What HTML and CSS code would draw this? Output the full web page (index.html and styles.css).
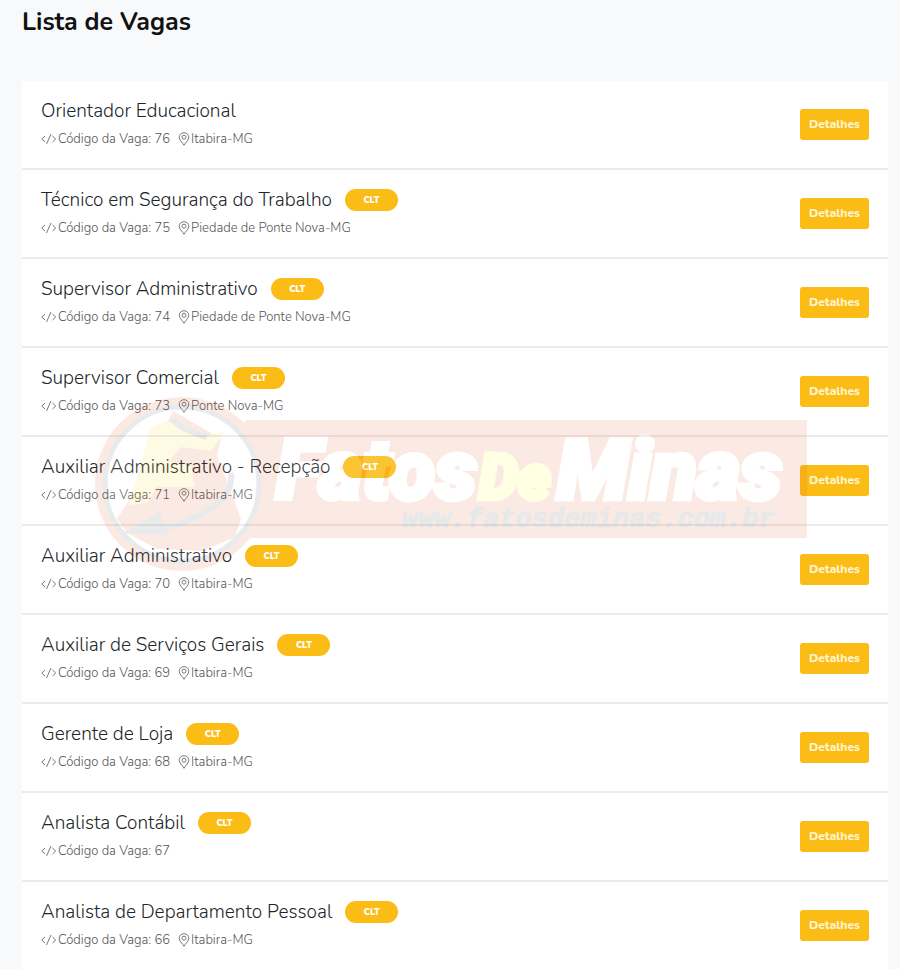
FILE: index.html
```html
<!DOCTYPE html>
<html lang="pt-BR">
<head>
  <meta charset="UTF-8" />
  <meta name="viewport" content="width=device-width, initial-scale=1.0"/>
  <title>Lista de Vagas</title>
  <link rel="stylesheet" href="styles.css">
</head>
<body>
  <svg class="sprite" aria-hidden="true">
    <symbol id="code" viewBox="0 0 16 12">
      <path d="M4 3 .8 6 4 9M11.500 3 14.700 6l-3.200 3M10 1 5.500 11" />
    </symbol>
    <symbol id="pin" viewBox="0 0 12 14">
      <path d="M6 13.300C4.500 10.500 1.200 8 1.200 5.200a4.800 4.500 0 0 1 9.600 0C10.800 8 7.500 10.500 6 13.300z" />
      <circle cx="6" cy="5.200" r="2" />
    </symbol>
  </svg>

  <h1>Lista de Vagas</h1>

  <main class="jobs">
    <ul id="jobList" class="job-list"></ul>

    <svg class="watermark" viewBox="0 0 712 178" aria-hidden="true">
      <rect class="wm-red" x="150" y="25" width="562" height="118" />
      <circle class="wm-red" cx="87" cy="89" r="87" />
      <circle class="wm-ring" cx="87" cy="89" r="77" />
      <path class="wm-red" d="M78 16 92 24 126 44 122 60 146 124 140 142 108 156 62 154 32 138 22 124 40 96 56 60z" />
      <path class="wm-yellow" d="M56 32 72 26 108 42 130 36 116 56 86 52 74 66 96 72 100 92 62 92 52 108 34 110 44 76z" />
      <path class="wm-line" d="M78 24Q84 34 112 42M136 78Q138 98 118 112T74 132" />
      <path class="wm-dark" d="M28 138 52 124 66 116 66 126 74 130 72 140z" />
      <text class="wm-name" x="181" y="104">Fatos</text>
      <text class="wm-name wm-de" x="384" y="104">De</text>
      <text class="wm-name" x="462" y="104">Minas</text>
      <text class="wm-site" x="307" y="132">www.fatosdeminas.com.br</text>
    </svg>
  </main>

  <script>
    const jobs = [
      { code: 76, title: "Orientador Educacional", city: "Itabira-MG" },
      { code: 75, title: "Técnico em Segurança do Trabalho", type: "CLT", city: "Piedade de Ponte Nova-MG" },
      { code: 74, title: "Supervisor Administrativo", type: "CLT", city: "Piedade de Ponte Nova-MG" },
      { code: 73, title: "Supervisor Comercial", type: "CLT", city: "Ponte Nova-MG" },
      { code: 71, title: "Auxiliar Administrativo - Recepção", type: "CLT", city: "Itabira-MG" },
      { code: 70, title: "Auxiliar Administrativo", type: "CLT", city: "Itabira-MG" },
      { code: 69, title: "Auxiliar de Serviços Gerais", type: "CLT", city: "Itabira-MG" },
      { code: 68, title: "Gerente de Loja", type: "CLT", city: "Itabira-MG" },
      { code: 67, title: "Analista Contábil", type: "CLT" },
      { code: 66, title: "Analista de Departamento Pessoal", type: "CLT", city: "Itabira-MG" }
    ];

    function jobRow(job) {
      const badge = job.type ? `<span class="badge">${job.type}</span>` : "";
      const city = job.city
        ? `<span class="meta-item"><svg class="icon-pin"><use href="#pin"/></svg>${job.city}</span>`
        : "";
      return `
        <li class="job">
          <div class="job-info">
            <div class="job-head"><h2>${job.title}</h2>${badge}</div>
            <div class="job-meta">
              <span class="meta-item"><svg class="icon-code"><use href="#code"/></svg>Código da Vaga: ${job.code}</span>
              ${city}
            </div>
          </div>
          <a class="btn" href="#vaga-${job.code}">Detalhes</a>
        </li>`;
    }

    document.getElementById("jobList").innerHTML = jobs.map(jobRow).join("");
  </script>
</body>
</html>
```

FILE: styles.css
```css
* {
  box-sizing: border-box;
}
body {
  margin: 0;
  padding: 4px 12px 0 22px;
  font-family: Nunito, "Open Sans", "Noto Sans", sans-serif;
  background: #f8f9fb;
  color: #212529;
}
h1 {
  margin: 0 0 41px;
  font-size: 25px;
  line-height: 36px;
  font-weight: 700;
  color: #111;
}
.sprite {
  display: none;
}
.jobs {
  position: relative;
}
.job-list {
  margin: 0;
  padding: 0;
  list-style: none;
  background: #fff;
}
.job {
  display: flex;
  align-items: center;
  justify-content: space-between;
  height: 89px;
  padding: 0 19px;
  border-bottom: 2px solid #ebebeb;
}
.job:last-child {
  border-bottom-color: #fff;
}
.job-info {
  padding-bottom: 3px;
}
.job-head {
  display: flex;
  align-items: center;
  gap: 13px;
}
h2 {
  margin: 0;
  font-size: 19px;
  line-height: 28px;
  font-weight: 300;
  color: #212529;
}
.badge {
  width: 53px;
  border-radius: 11px;
  background: #fbbc16;
  color: #fff;
  font-size: 9px;
  line-height: 22px;
  font-weight: 900;
  text-align: center;
}
.job-meta {
  display: flex;
  gap: 8px;
  margin-top: 4px;
  font-size: 13px;
  line-height: 20px;
  font-weight: 300;
  color: #555;
}
.meta-item {
  display: flex;
  align-items: center;
  gap: 1px;
}
.icon-code,
.icon-pin {
  fill: none;
  stroke: #777;
  stroke-width: 1;
}
.icon-code {
  width: 16px;
  height: 12px;
}
.icon-pin {
  width: 12px;
  height: 14px;
}
.btn {
  width: 69px;
  height: 31px;
  border-radius: 3px;
  background: #fbbc16;
  color: #fff5d0;
  font-size: 12px;
  line-height: 30px;
  font-weight: 800;
  text-align: center;
  text-decoration: none;
}

/* logo over the middle of the list */
.watermark {
  position: absolute;
  top: 314px;
  left: 73px;
  width: 712px;
  height: 178px;
  opacity: 0.12;
  pointer-events: none;
}
.wm-red {
  fill: #e65826;
}
.wm-ring {
  fill: #fff;
  stroke: #4a5a66;
  stroke-width: 5;
}
.wm-yellow {
  fill: #ffd820;
}
.wm-line {
  fill: none;
  stroke: #4a5a66;
  stroke-width: 6;
}
.wm-dark {
  fill: #4a5a66;
}
.wm-name {
  fill: #fff;
  stroke: #fff;
  stroke-width: 5;
  font-family: Roboto, "Liberation Sans", sans-serif;
  font-size: 84px;
  font-weight: 900;
  font-style: italic;
}
.wm-de {
  fill: #f8ff20;
  stroke: #f8ff20;
  font-size: 62px;
}
.wm-site {
  fill: #3a4a56;
  stroke: #3a4a56;
  stroke-width: 1;
  font-family: "Liberation Mono", monospace;
  font-size: 27px;
  font-weight: 700;
  font-style: italic;
}
```
